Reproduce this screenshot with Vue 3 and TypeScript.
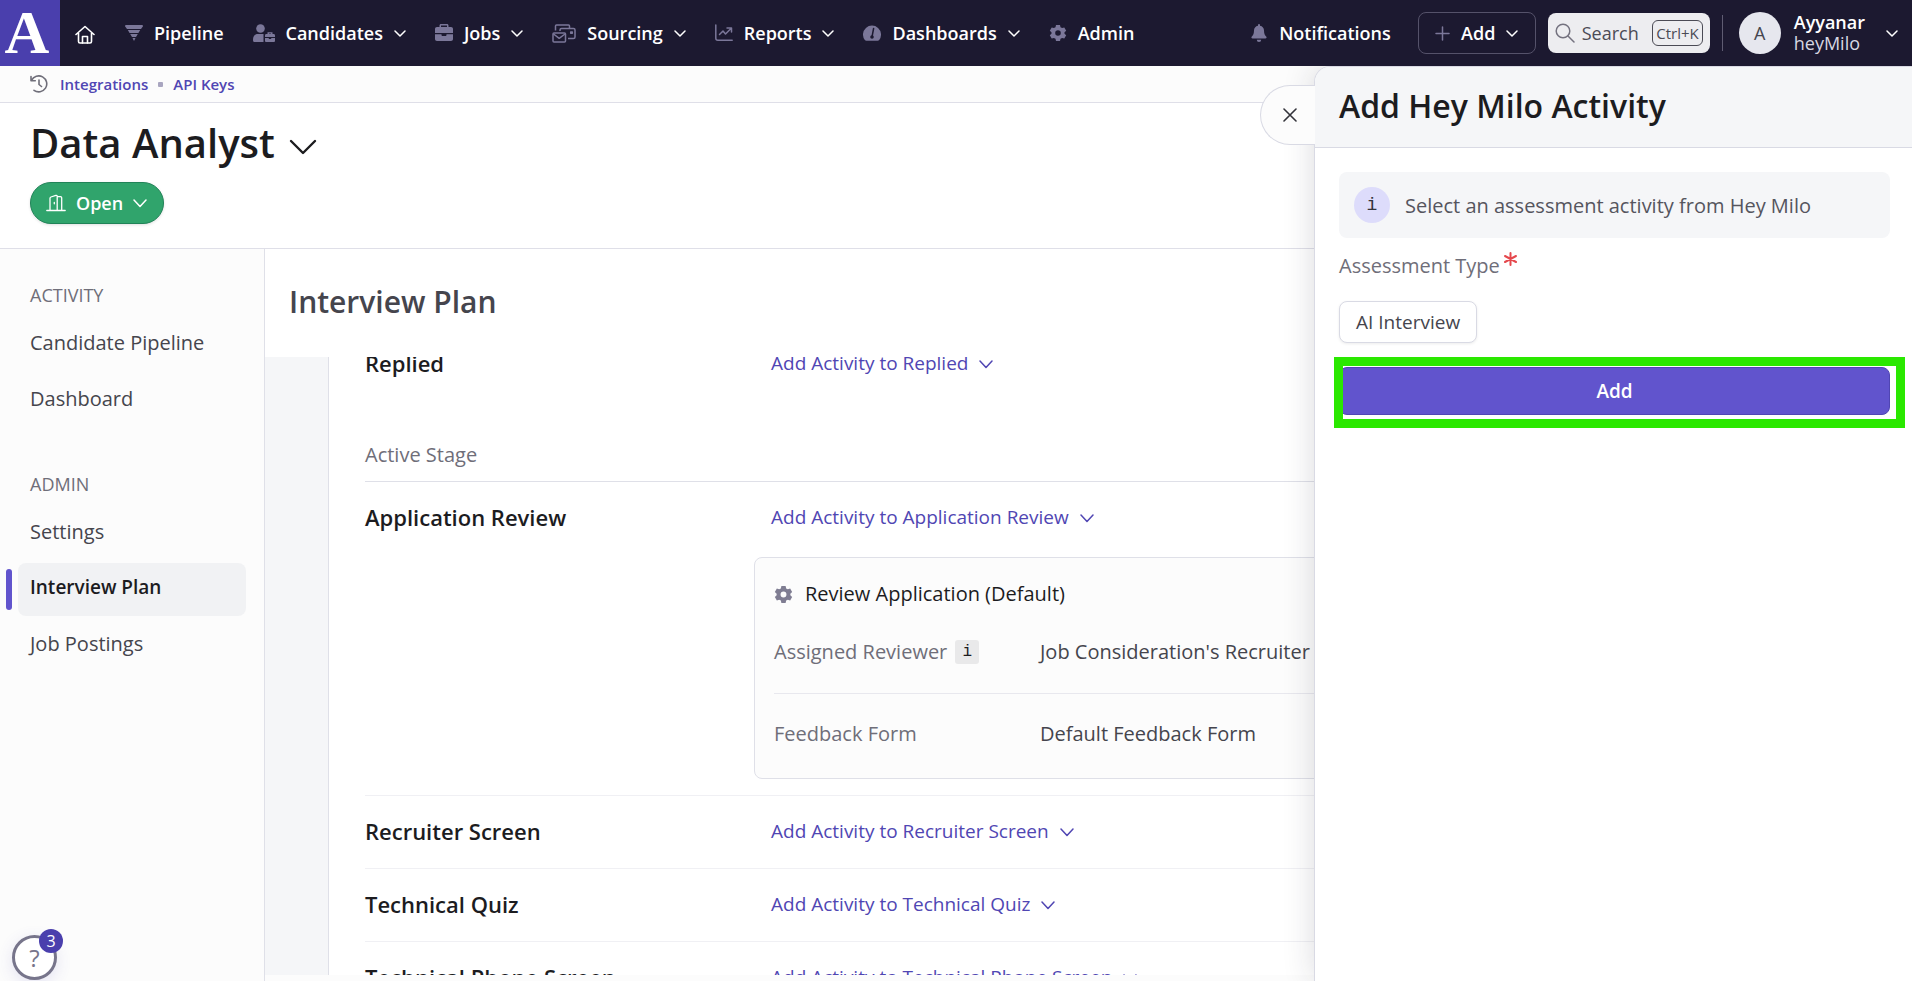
<script setup lang="ts">
import { ref } from 'vue'

interface NavItem {
  label: string
  icon: string
  menu: boolean
}

interface Stage {
  title: string
  fields?: { name: string; value: string; hint: boolean }[]
}

const navItems: NavItem[] = [
  { label: 'Pipeline', icon: 'pipeline', menu: false },
  { label: 'Candidates', icon: 'candidates', menu: true },
  { label: 'Jobs', icon: 'jobs', menu: true },
  { label: 'Sourcing', icon: 'sourcing', menu: true },
  { label: 'Reports', icon: 'reports', menu: true },
  { label: 'Dashboards', icon: 'dashboards', menu: true },
  { label: 'Admin', icon: 'gear', menu: false },
]

const sections = [
  { heading: 'ACTIVITY', links: ['Candidate Pipeline', 'Dashboard'] },
  { heading: 'ADMIN', links: ['Settings', 'Interview Plan', 'Job Postings'] },
]

const activeStages: Stage[] = [
  {
    title: 'Application Review',
    fields: [
      { name: 'Assigned Reviewer', value: "Job Consideration's Recruiter", hint: true },
      { name: 'Feedback Form', value: 'Default Feedback Form', hint: false },
    ],
  },
  { title: 'Recruiter Screen' },
  { title: 'Technical Quiz' },
  { title: 'Technical Phone Screen' },
]

const current = ref('Interview Plan')
const query = ref('')
const gearPath =
  'M7 0h4l.5 2.200 1.600.9 2.200-.7 1.900 3.300-1.700 1.500v1.600l1.700 1.500-1.900 3.300-2.200-.7-1.600.9L11 16H7l-.5-2.200-1.600-.9-2.200.7L.8 10.300l1.700-1.500V7.200L.8 5.700l1.900-3.300 2.200.7 1.600-.9zM9 5.200a2.800 2.800 0 1 0 0 5.600 2.800 2.800 0 0 0 0-5.600z'
</script>

<template>
  <div class="page">
    <header class="topbar">
      <a class="logo" href="#" aria-label="Ashby home">A</a>
      <a class="home" href="#" aria-label="Home">
        <svg width="20" height="20" viewBox="0 0 20 20" fill="none" stroke="#fff" stroke-width="1.6" stroke-linecap="round" stroke-linejoin="round">
          <path d="M1 9.500 10 1.500l9 8M3.500 8v8.500a1.500 1.500 0 0 0 1.500 1.500h10a1.500 1.500 0 0 0 1.500-1.500V8" />
          <path d="M7.500 18v-6.500h5V18" />
        </svg>
      </a>
      <nav class="nav" aria-label="Main">
        <a v-for="item in navItems" :key="item.label" class="nav-item" href="#">
          <svg v-if="item.icon === 'pipeline'" width="18" height="18" viewBox="0 0 18 18" fill="#7b7799">
            <path d="M1 1h16a1 1 0 0 1 .8 1.600L16 5H2L.2 2.600A1 1 0 0 1 1 1zM2.800 6h12.400L13.400 9H4.600zM5.200 10h7.600L11 13H7zM7.500 14h3L9 17z" />
          </svg>
          <svg v-else-if="item.icon === 'candidates'" width="22" height="18" viewBox="0 0 22 18" fill="#7b7799">
            <circle cx="7.500" cy="4.500" r="4.300" />
            <path d="M0 16c0-4 2-6 5-6h5.500v8H1.500C.5 18 0 17.500 0 16z" />
            <path d="M12 11.500c0-.8.5-1.500 1.300-1.500h1.200V8.300h5V10h1.200c.8 0 1.300.7 1.300 1.500V13H12zM16 9.500V10h2v-.5zM12 14h3.800v1h2.400v-1H22v2.800c0 .8-.5 1.200-1.200 1.200h-7.600c-.7 0-1.200-.4-1.200-1.200z" />
          </svg>
          <svg v-else-if="item.icon === 'jobs'" width="18" height="18" viewBox="0 0 18 18" fill="#7b7799" fill-rule="evenodd">
            <path d="M4.500 3V1.500C4.500.6 5.100 0 6 0h6c.9 0 1.500.6 1.500 1.500V3H16c1.200 0 2 .8 2 2v4H0V5c0-1.200.8-2 2-2zM6 1.500V3h6V1.500z" />
            <path d="M0 10.200h6.500v.8c0 .5.400 1 1 1h3c.6 0 1-.5 1-1v-.8H18V15c0 1.200-.8 2-2 2H2c-1.200 0-2-.8-2-2z" />
          </svg>
          <svg v-else-if="item.icon === 'sourcing'" width="24" height="19" viewBox="0 0 24 19" fill="none" stroke="#7b7799" stroke-width="1.500" stroke-linejoin="round">
            <rect x="1" y="9" width="12.500" height="9" rx="1" />
            <path d="m1.500 10 5.700 4.300L13 10M3.500 6.500V2c0-.6.400-1 1-1h12c.6 0 1 .4 1 1v2.500M8 7V6c0-1 .6-1.500 1.500-1.500h12c.9 0 1.500.6 1.500 1.500v7c0 .9-.6 1.500-1.500 1.500H16" />
            <path d="M18.700 8h1.600v1.300h-1.600z" />
          </svg>
          <svg v-else-if="item.icon === 'reports'" width="18" height="18" viewBox="0 0 18 18" fill="none" stroke="#7b7799" stroke-width="1.500" stroke-linecap="round" stroke-linejoin="round">
            <path d="M.8 1v13.200c0 1.200.8 2 2 2H17.200M4.500 10.500 8 7l2.500 3L16 4.500M12 4h4.500v4" />
          </svg>
          <svg v-else-if="item.icon === 'dashboards'" width="18" height="18" viewBox="0 0 18 18">
            <path fill="#7b7799" d="M1.800 16a9 9 0 1 1 14.400 0c-.4.500-1 .7-1.500.7H3.300c-.6 0-1.100-.2-1.500-.7z" />
            <path d="m10.600 4.500-1.400 7.300" stroke="#1c1930" stroke-width="1.500" stroke-linecap="round" />
            <circle cx="9" cy="13" r="1.800" fill="#1c1930" />
          </svg>
          <svg v-else class="gear" width="18" height="18" viewBox="0 0 18 16" fill="#7b7799" fill-rule="evenodd">
            <path :d="gearPath" />
          </svg>
          <span>{{ item.label }}</span>
          <svg v-if="item.menu" class="chev" width="12" height="7" viewBox="0 0 12 7"><path d="m1 1 5 5 5-5" /></svg>
        </a>
      </nav>
      <div class="tools">
        <a class="notify" href="#">
          <svg width="16" height="18" viewBox="0 0 16 18" fill="#7b7799">
            <path d="M7 1a1 1 0 0 1 2 0v.700c2.500.5 4 2.300 4 4.800 0 3.200.8 4.700 2.200 6 .8.800.4 2-.8 2H1.600c-1.200 0-1.600-1.200-.8-2C2.200 11.200 3 9.700 3 6.500c0-2.500 1.500-4.300 4-4.800zM5.800 15.800h4.400a2.200 2.200 0 0 1-4.400 0z" />
          </svg>
          <span>Notifications</span>
        </a>
        <button class="add-menu" type="button">
          <svg width="15" height="15" viewBox="0 0 15 15" fill="none" stroke="#7b7799" stroke-width="1.500" stroke-linecap="round"><path d="M7.500 1v13M1 7.500h13" /></svg>
          <span>Add</span>
          <svg class="chev" width="12" height="7" viewBox="0 0 12 7"><path d="m1 1 5 5 5-5" /></svg>
        </button>
        <label class="search">
          <svg width="20" height="20" viewBox="0 0 20 20" fill="none" stroke="#74727f" stroke-width="1.500" stroke-linecap="round"><circle cx="8" cy="8" r="6.800" /><path d="m13 13 6 6" /></svg>
          <input v-model="query" type="text" placeholder="Search" aria-label="Search">
          <kbd>Ctrl+K</kbd>
        </label>
        <span class="divider"></span>
        <button class="account" type="button">
          <span class="avatar">A</span>
          <span class="who"><span>Ayyanar</span><span class="org">heyMilo</span></span>
          <svg class="chev" width="12" height="7" viewBox="0 0 12 7"><path d="m1 1 5 5 5-5" /></svg>
        </button>
      </div>
    </header>

    <nav class="crumbs" aria-label="Recent">
      <svg width="18" height="18" viewBox="0 0 18 18" fill="none" stroke="#6f6e79" stroke-width="1.600" stroke-linecap="round" stroke-linejoin="round">
        <path d="M1 1.500v4.300h4.300M1.500 5.500A8 8 0 1 1 4 15.300M9 5v4.500l2.500 2" />
      </svg>
      <a href="#">Integrations</a>
      <span class="dot"></span>
      <a href="#">API Keys</a>
    </nav>

    <div class="job">
      <h1>
        Data Analyst
        <svg width="28" height="16" viewBox="0 0 28 16" fill="none" stroke="#1c1c1f" stroke-width="2.400" stroke-linecap="round" stroke-linejoin="round"><path d="m2 2 12 12L26 2" /></svg>
      </h1>
      <button class="status" type="button">
        <svg width="20" height="18" viewBox="0 0 20 18" fill="none" stroke="#fff" stroke-width="1.300" stroke-linecap="round" stroke-linejoin="round">
          <path d="M.8 16.500h18.400M4 16.500V4.200c0-.6.300-1 .9-1.200l5-1.600c.7-.2 1.300.2 1.300.9v14.200M11.200 2.700h3.300c.7 0 1.200.4 1.200 1.100v12.700M8.300 8.500v1.300" />
        </svg>
        <span>Open</span>
        <svg class="chev" width="14" height="9" viewBox="0 0 14 9"><path d="m1 1 6 6.500L13 1" /></svg>
      </button>
    </div>

    <div class="body">
      <aside class="side">
        <section v-for="s in sections" :key="s.heading">
          <h2>{{ s.heading }}</h2>
          <a v-for="l in s.links" :key="l" href="#" :class="{ on: l === current }" @click.prevent="current = l">{{ l }}</a>
        </section>
      </aside>

      <main class="main">
        <h2 class="main-title">Interview Plan</h2>
        <div class="scroller">
          <div class="plan">
            <div class="stage">
              <h3>Replied</h3>
              <button class="add-link" type="button">
                Add Activity to Replied
                <svg class="chev" width="14" height="9" viewBox="0 0 14 9"><path d="m1 1 6 6.500L13 1" /></svg>
              </button>
            </div>
            <p class="group">Active Stage</p>
            <div v-for="stage in activeStages" :key="stage.title" class="stage lined">
              <h3>{{ stage.title }}</h3>
              <button class="add-link" type="button">
                Add Activity to {{ stage.title }}
                <svg class="chev" width="14" height="9" viewBox="0 0 14 9"><path d="m1 1 6 6.500L13 1" /></svg>
              </button>
              <article v-if="stage.fields" class="card">
                <h4>
                  <svg width="19" height="19" viewBox="0 0 18 16" fill="#7f7d92" fill-rule="evenodd"><path :d="gearPath" /></svg>
                  Review Application (Default)
                </h4>
                <dl>
                  <div v-for="f in stage.fields" :key="f.name" class="field">
                    <dt>{{ f.name }} <span v-if="f.hint" class="hint">i</span></dt>
                    <dd>{{ f.value }}</dd>
                  </div>
                </dl>
              </article>
            </div>
          </div>
        </div>
      </main>
    </div>

    <button class="help" type="button" aria-label="Help">
      <span class="q">?</span>
      <span class="count">3</span>
    </button>

    <section class="drawer" aria-labelledby="drawer-title">
      <button class="close" type="button" aria-label="Close">
        <svg width="14" height="14" viewBox="0 0 14 14" fill="none" stroke="#33333a" stroke-width="1.600" stroke-linecap="round"><path d="m1 1 12 12M13 1 1 13" /></svg>
      </button>
      <div class="drawer-head"><h2 id="drawer-title">Add Hey Milo Activity</h2></div>
      <div class="drawer-body">
        <p class="note"><span class="info">i</span>Select an assessment activity from Hey Milo</p>
        <div role="group" aria-labelledby="assessment-type">
          <p id="assessment-type" class="label">
            Assessment Type
            <svg width="13" height="14" viewBox="0 0 13 14" stroke="#e5484d" stroke-width="2" stroke-linecap="round"><path d="M6.500 1v12M1 4l11 6M12 4 1 10" /></svg>
          </p>
          <button class="choice" type="button">AI Interview</button>
        </div>
        <div class="submit-wrap">
          <button class="submit" type="button">Add</button>
        </div>
      </div>
    </section>
  </div>
</template>

<style>
html,
body {
  height: 100%;
  margin: 0;
  overflow: hidden;
}
#app {
  height: 100%;
}
</style>

<style scoped>
* {
  box-sizing: border-box;
}
.page {
  position: relative;
  display: flex;
  flex-direction: column;
  height: 100vh;
  overflow: hidden;
  background: #fff;
  color: #1c1c1f;
  font-family: 'Open Sans', 'Noto Sans', sans-serif;
  font-size: 20px;
}
h1, h2, h3, h4, p, dl, dd, dt {
  margin: 0;
}
a {
  color: inherit;
  text-decoration: none;
}
button,
input {
  font: inherit;
  color: inherit;
}
button {
  cursor: pointer;
}
svg {
  flex: none;
  display: block;
}
.chev {
  fill: none;
  stroke: currentColor;
  stroke-width: 1.5px;
  stroke-linecap: round;
  stroke-linejoin: round;
}

.topbar {
  display: flex;
  align-items: center;
  flex: none;
  height: 66px;
  background: #1c1930;
  color: #fff;
  font-size: 18px;
  font-weight: 600;
  white-space: nowrap;
}
.logo {
  width: 60px;
  height: 66px;
  background: #4a3fad;
  font: bold 62px/64px 'Liberation Serif', serif;
  text-align: center;
  padding-right: 6px;
}
.home {
  margin: 4px 30px 0 15px;
}
.nav {
  display: flex;
  gap: 29px;
}
.nav-item {
  display: flex;
  align-items: center;
  gap: 11px;
  line-height: 24px;
}
.tools {
  display: flex;
  align-items: center;
  margin-left: auto;
  padding-right: 14px;
}
.notify {
  display: flex;
  align-items: center;
  gap: 12px;
  margin-right: 27px;
}
.add-menu {
  display: flex;
  align-items: center;
  justify-content: center;
  gap: 11px;
  width: 118px;
  height: 42px;
  margin-right: 12px;
  background: none;
  border: 1px solid #55526a;
  border-radius: 8px;
}
.search {
  display: flex;
  align-items: center;
  gap: 7px;
  width: 162px;
  height: 40px;
  padding: 0 7px;
  background: #ededf0;
  border-radius: 8px;
  color: #4b4b55;
  font-size: 18px;
  font-weight: 400;
}
.search input {
  flex: 1;
  min-width: 0;
  padding: 0;
  border: 0;
  outline: 0;
  background: none;
}
.search input::placeholder {
  color: #4b4b55;
  opacity: 1;
}
.search kbd {
  padding: 0 3px;
  border: 1px solid #4b4b55;
  border-radius: 6px;
  font: 15px/24px 'Open Sans', sans-serif;
}
.divider {
  width: 1px;
  height: 36px;
  margin: 0 16px 0 12px;
  background: #5f5c72;
}
.account {
  display: flex;
  align-items: center;
  gap: 13px;
  padding: 0;
  background: none;
  border: 0;
  text-align: left;
}
.avatar {
  width: 42px;
  height: 42px;
  border-radius: 50%;
  background: #e6e7ee;
  color: #45454f;
  font-size: 18px;
  font-weight: 400;
  line-height: 42px;
  text-align: center;
}
.who {
  display: grid;
  line-height: 21px;
  margin-right: 8px;
}
.org {
  color: #d8d7e2;
  font-weight: 400;
}

.crumbs {
  display: flex;
  align-items: center;
  flex: none;
  height: 37px;
  gap: 10px;
  padding: 0 30px;
  border-bottom: 1px solid #dfdfe8;
  background: #fcfcfc;
  color: #5046b3;
  font-size: 15px;
  font-weight: 600;
}
.crumbs svg {
  margin-right: 2px;
}
.dot {
  width: 5px;
  height: 5px;
  border-radius: 1px;
  background: #a9a6c0;
}

.job {
  flex: none;
  padding: 13px 30px 24px;
  border-bottom: 1px solid #dfdfe8;
}
.job h1 {
  display: flex;
  align-items: center;
  gap: 14px;
  font-size: 40px;
  font-weight: 600;
  line-height: 54px;
}
.job h1 svg {
  margin-top: 8px;
}
.status {
  display: flex;
  align-items: center;
  gap: 10px;
  height: 42px;
  margin-top: 12px;
  padding: 0 16px 0 15px;
  border: 1px solid #218358;
  border-radius: 21px;
  background: #30a46c;
  box-shadow: 0 1px 3px rgba(0, 0, 0, 0.12);
  color: #fff;
  font-size: 18px;
  font-weight: 600;
}

.body {
  display: flex;
  flex: 1;
  min-height: 0;
}
.side {
  flex: none;
  width: 265px;
  padding: 34px 18px 0;
  border-right: 1px solid #dfe0e8;
  background: #fcfcfc;
}
.side section {
  display: grid;
  gap: 3px;
  margin-bottom: 45px;
}
.side h2 {
  margin: 0 12px 8px;
  color: #6f6e79;
  font-size: 18px;
  font-weight: 400;
  line-height: 24px;
}
.side a {
  position: relative;
  padding: 0 12px 4px;
  border-radius: 8px;
  color: #45454d;
  line-height: 49px;
}
.side a.on {
  background: #f1f2f4;
  color: #1c1c1f;
  font-size: 19px;
  font-weight: 600;
}
.side a.on::before {
  content: '';
  position: absolute;
  left: -12px;
  top: 6px;
  bottom: 6px;
  width: 6px;
  border-radius: 3px;
  background: #6154cd;
}
.main {
  display: flex;
  flex: 1;
  flex-direction: column;
  min-width: 0;
  padding-bottom: 6px;
  background: #fcfcfc;
}
.main-title {
  padding: 33px 24px 35px;
  background: #fff;
  color: #45454d;
  font-size: 30px;
  font-weight: 600;
  line-height: 40px;
}
.scroller {
  flex: 1;
  min-height: 0;
  overflow: hidden;
  padding: 0 63px;
  background: #f5f6f8;
}
.plan {
  margin-top: -29px;
  padding: 0 36px;
  border: solid #dfe0e8;
  border-width: 0 1px;
  background: #fff;
}
.stage {
  display: grid;
  grid-template-columns: 389px 1fr;
  row-gap: 3px;
}
.stage.lined {
  border-bottom: 1px solid #f0f0f4;
}
.stage h3 {
  padding: 20px 0 22px;
  font-size: 22px;
  font-weight: 600;
  line-height: 30px;
}
.group {
  padding: 41px 0 12px;
  border-bottom: 1px solid #dfe0e8;
  color: #6f6e79;
  line-height: 28px;
}
.add-link {
  display: flex;
  align-items: center;
  align-self: start;
  justify-self: start;
  gap: 11px;
  margin-top: 21px;
  padding: 0 17px;
  background: none;
  border: 0;
  color: #5046b3;
  font-size: 19px;
  line-height: 28px;
}
.add-link .chev {
  margin-top: 3px;
}
.card {
  grid-column: 2;
  margin-bottom: 16px;
  padding: 22px 19px 30px;
  border: 1px solid #dfe0e8;
  border-radius: 8px;
  background: #fcfcfc;
}
.card h4 {
  display: flex;
  align-items: center;
  gap: 12px;
  font-size: 20px;
  font-weight: 400;
  line-height: 28px;
}
.field {
  display: grid;
  grid-template-columns: 266px 1fr;
  line-height: 28px;
}
.field:first-child {
  padding: 30px 0 27px;
  border-bottom: 1px solid #e8e8ee;
}
.field:last-child {
  padding-top: 26px;
}
dt {
  display: flex;
  align-items: center;
  gap: 8px;
  color: #6f6e79;
}
dd {
  color: #45454d;
}
.hint {
  width: 24px;
  height: 24px;
  border-radius: 3px;
  background: #e9e9ea;
  color: #1c1c1f;
  font: 16px/24px 'Liberation Mono', monospace;
  text-align: center;
}

.help {
  position: absolute;
  left: 12px;
  bottom: 1px;
  width: 45px;
  height: 45px;
  padding: 0;
  border: 3px solid #77758b;
  border-radius: 50%;
  background: #fff;
  box-shadow: 0 4px 16px rgba(80, 70, 179, 0.14);
  color: #77758b;
}
.q {
  font-size: 24px;
  line-height: 38px;
}
.count {
  position: absolute;
  right: -9px;
  top: -9px;
  width: 24px;
  height: 24px;
  border-radius: 50%;
  background: #4a3fad;
  color: #fff;
  font-size: 16px;
  line-height: 24px;
  text-align: center;
}

.drawer {
  position: absolute;
  top: 66px;
  right: 0;
  bottom: 0;
  width: 598px;
  border: solid #d9dae4;
  border-width: 1px 0 0 1px;
  border-radius: 16px 0 0 0;
  background: #fff;
  box-shadow: 0 0 32px rgba(30, 30, 50, 0.16);
  clip-path: inset(0 0 0 -100px);
}
.close {
  position: absolute;
  right: 100%;
  top: 18px;
  display: flex;
  align-items: center;
  justify-content: center;
  width: 55px;
  height: 60px;
  padding: 0 0 0 4px;
  border: 1px solid #d9dae4;
  border-right: 0;
  border-radius: 30px 0 0 30px;
  background: #fcfcfc;
}
.drawer-head {
  padding: 17px 24px 19px;
  border-bottom: 1px solid #d9dae4;
  border-radius: 15px 0 0 0;
  background: #f5f6f8;
}
.drawer-head h2 {
  font-size: 32px;
  font-weight: 600;
  line-height: 44px;
}
.drawer-body {
  padding: 24px 22px 24px 24px;
}
.note {
  display: flex;
  align-items: center;
  gap: 15px;
  height: 66px;
  padding: 0 15px;
  border-radius: 8px;
  background: #f5f6f8;
  color: #55555e;
}
.info {
  width: 36px;
  height: 36px;
  border-radius: 50%;
  background: #dddcfb;
  color: #33333a;
  font: 18px/36px 'Liberation Mono', monospace;
  text-align: center;
}
.label {
  display: flex;
  gap: 4px;
  margin: 14px 0 21px;
  color: #6f6e79;
  line-height: 28px;
}
.choice {
  height: 42px;
  padding: 0 16px;
  border: 1px solid #d9dae4;
  border-radius: 8px;
  background: #fff;
  box-shadow: 0 1px 3px rgba(0, 0, 0, 0.08);
  color: #45454d;
  font-size: 19px;
}
.submit-wrap {
  position: relative;
  margin-top: 24px;
}
.submit-wrap::after {
  content: '';
  position: absolute;
  inset: -10px -15px -13px -5px;
  border: 9px solid #2ae800;
  pointer-events: none;
}
.submit {
  display: block;
  width: 100%;
  height: 48px;
  border: 1px solid #5046b3;
  border-radius: 8px;
  background: #6154cd;
  color: #fff;
  font-size: 19px;
  font-weight: 600;
}
</style>
